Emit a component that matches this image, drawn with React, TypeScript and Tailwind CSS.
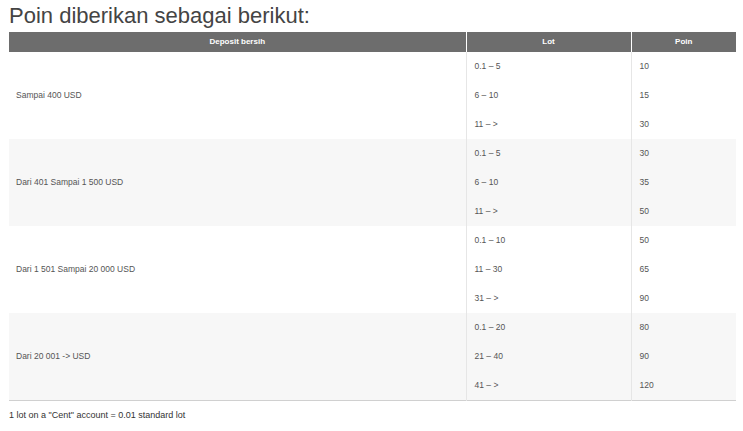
const groups = [
  {
    deposit: "Sampai 400 USD",
    rows: [
      ["0.1 – 5", "10"],
      ["6 – 10", "15"],
      ["11 – >", "30"],
    ],
  },
  {
    deposit: "Dari 401 Sampai 1 500 USD",
    rows: [
      ["0.1 – 5", "30"],
      ["6 – 10", "35"],
      ["11 – >", "50"],
    ],
  },
  {
    deposit: "Dari 1 501 Sampai 20 000 USD",
    rows: [
      ["0.1 – 10", "50"],
      ["11 – 30", "65"],
      ["31 – >", "90"],
    ],
  },
  {
    deposit: "Dari 20 001 -> USD",
    rows: [
      ["0.1 – 20", "80"],
      ["21 – 40", "90"],
      ["41 – >", "120"],
    ],
  },
];

export default function App() {
  return (
    <div className="w-[743px] h-[431px] bg-white pl-[9px] font-['Liberation_Sans',Arial,sans-serif] overflow-hidden">
      <h1 className="text-[22px] leading-[26px] pt-[3px] text-[#444] font-normal">
        Poin diberikan sebagai berikut:
      </h1>
      <table className="w-[727px] border-collapse mt-[3px] table-fixed border-b border-[#d0d0d0]">
        <thead>
          <tr className="h-[20px] bg-[#6d6d6d] text-white text-[8px] font-bold">
            <th className="w-[457px] border-r border-white font-bold">Deposit bersih</th>
            <th className="w-[165px] border-r border-white font-bold">Lot</th>
            <th className="font-bold">Poin</th>
          </tr>
        </thead>
        <tbody className="text-[8.5px] text-[#555]">
          {groups.map((g, gi) =>
            g.rows.map((r, ri) => (
              <tr
                key={`${gi}-${ri}`}
                className={`h-[29px] ${gi % 2 === 1 ? "bg-[#f7f7f7]" : "bg-white"}`}
              >
                {ri === 0 && (
                  <td rowSpan={3} className="pl-[7px] border-r border-[#e6e6e6] align-middle">
                    {g.deposit}
                  </td>
                )}
                <td className="pl-[8px] border-r border-[#e6e6e6]">{r[0]}</td>
                <td className="pl-[8px]">{r[1]}</td>
              </tr>
            ))
          )}
        </tbody>
      </table>
      <p className="text-[9px] text-[#333] mt-[8px]">
        1 lot on a "Cent" account = 0.01 standard lot
      </p>
    </div>
  );
}
